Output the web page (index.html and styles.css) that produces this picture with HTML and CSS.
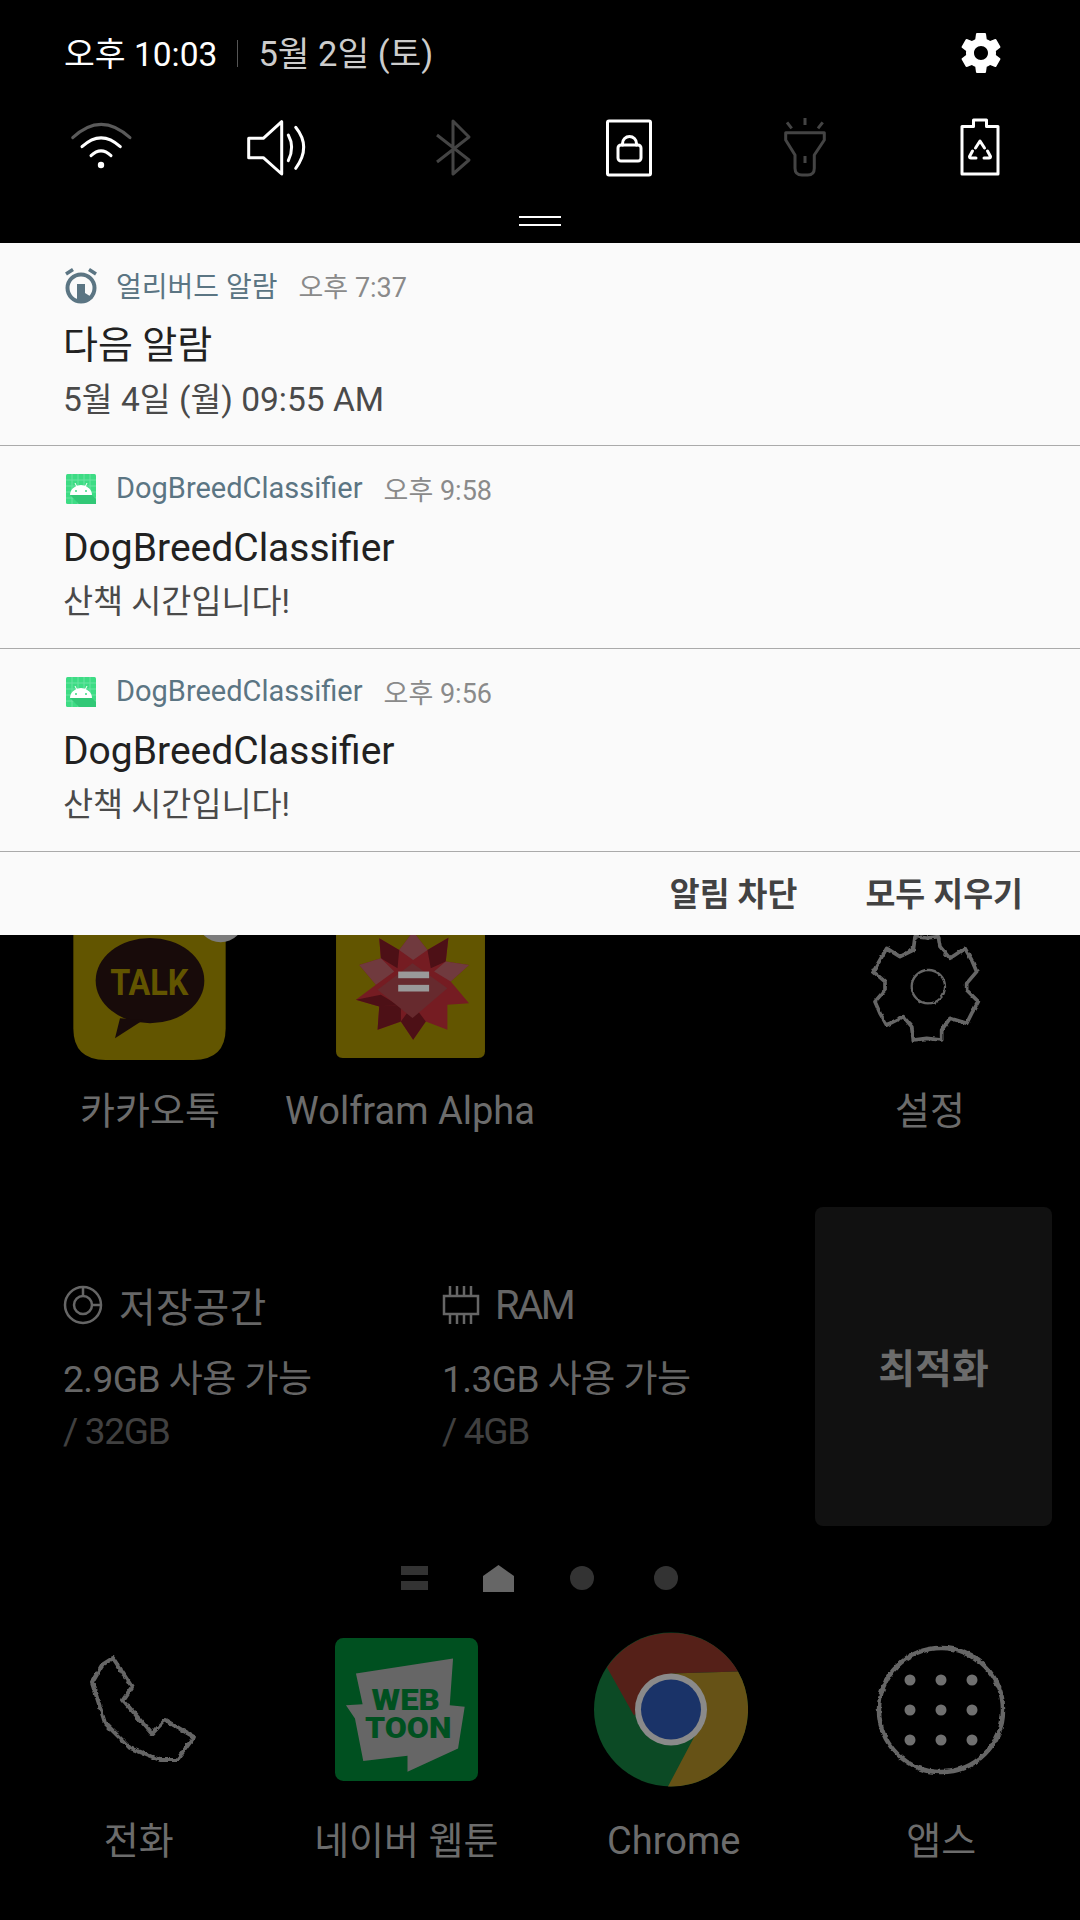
FILE: index.html
```html
<!DOCTYPE html>
<html lang="ko">
<head>
<meta charset="utf-8">
<title>Notification shade</title>
<link rel="stylesheet" href="styles.css">
</head>
<body>
<svg class="defs" aria-hidden="true"><defs>
  <filter id="rough" x="-10%" y="-10%" width="120%" height="120%">
    <feTurbulence type="fractalNoise" baseFrequency="0.07" numOctaves="2" seed="4" result="n"/>
    <feDisplacementMap in="SourceGraphic" in2="n" scale="9" xChannelSelector="R" yChannelSelector="G"/>
    <feGaussianBlur stdDeviation="0.7"/>
  </filter>
  <filter id="roughfine" x="-10%" y="-10%" width="120%" height="120%">
    <feTurbulence type="fractalNoise" baseFrequency="0.18" numOctaves="2" seed="7" result="n"/>
    <feDisplacementMap in="SourceGraphic" in2="n" scale="4" xChannelSelector="R" yChannelSelector="G"/>
    <feGaussianBlur stdDeviation="0.4"/>
  </filter>
</defs></svg>
<div class="screen">
  <header class="shade">
    <div class="status">
      <span class="clock">오후 10:03</span>
      <span class="sep"></span>
      <span class="date">5월 2일 (토)</span>
      <svg class="gear" viewBox="0 0 24 24"><path fill="#fff" d="M19.43 12.98c.04-.32.07-.64.07-.98s-.03-.66-.07-.98l2.11-1.65c.19-.15.24-.42.12-.64l-2-3.46c-.12-.22-.39-.3-.61-.22l-2.49 1c-.52-.4-1.08-.73-1.69-.98l-.38-2.65C14.46 2.18 14.25 2 14 2h-4c-.25 0-.46.18-.49.42l-.38 2.65c-.61.25-1.17.59-1.69.98l-2.49-1c-.23-.09-.49 0-.61.22l-2 3.46c-.13.22-.07.49.12.64l2.11 1.65c-.04.32-.07.65-.07.98s.03.66.07.98l-2.11 1.65c-.19.15-.24.42-.12.64l2 3.46c.12.22.39.3.61.22l2.49-1c.52.4 1.08.73 1.69.98l.38 2.65c.03.24.24.42.49.42h4c.25 0 .46-.18.49-.42l.38-2.65c.61-.25 1.17-.59 1.69-.98l2.49 1c.23.09.49 0 .61-.22l2-3.46c.12-.22.07-.49-.12-.64l-2.11-1.65zM12 15.5c-1.93 0-3.5-1.57-3.5-3.5s1.57-3.5 3.5-3.5 3.5 1.57 3.5 3.5-1.57 3.5-3.5 3.5z"/></svg>
    </div>
    <div class="toggles">
      <svg class="toggle" viewBox="60 108 80 80"><g class="ln-w">
        <path class="ln-dim" d="M71.7 137.7Q100 111 129 137.7"/>
        <path d="M81 146.7Q100 129 119.3 146.7"/>
        <path d="M90 155.7Q100 146 110 155.7"/></g>
        <circle cx="100" cy="165" r="3.2" fill="#fff"/></svg>
      <svg class="toggle" viewBox="237 108 80 80"><g class="ln-w">
        <path d="M248.7 138.3H263.3L281.7 121.7V174L263.3 157.7H248.7Z"/>
        <path d="M288.3 135Q295 147 288.3 160.7"/>
        <path d="M295.7 127.3Q311.7 147 295.7 168.3"/></g></svg>
      <svg class="toggle" viewBox="413 108 80 80"><path class="ln-g" d="M437 135L469 160L453 174V121L469 137L437 162"/></svg>
      <svg class="toggle" viewBox="590 108 80 80"><g class="ln-w">
        <rect x="608.5" y="121" width="43" height="54" rx="1.5"/>
        <rect x="619" y="145" width="23" height="16" rx="3"/>
        <path d="M623.5 145V143.500A7 7 0 0 1 637.500 143.500V145"/></g></svg>
      <svg class="toggle" viewBox="764 108 80 80"><g class="ln-g">
        <path d="M784.700 132.700H823.300V140L813.300 155V168.300Q813.300 175 806.700 175H801Q794 175 794 168.300V155L784.700 140Z"/>
        <path d="M804 156V163M804 118V125M786 122.300L790.700 128.300M821.700 122.300L817 128.300"/></g></svg>
      <svg class="toggle" viewBox="941 108 80 80"><g class="ln-w">
        <path d="M962 126.500H973.500V120H986.500V126.500H998V174H962Z"/>
        <path d="M975.500 148L980 141L984.500 148M972.500 151L969.500 156.500Q969.500 158 971 158H976M984 158H989Q990.500 158 990.500 156.500L987.500 151"/></g></svg>
    </div>
    <div class="handle"><i></i><i></i></div>
  </header>

  <section class="panel">
    <article class="note">
      <div class="note-head">
        <svg class="note-icon" viewBox="0 0 36 36">
          <path d="M3 6L10 1.500M33 6L26 1.500" stroke="#5b7583" stroke-width="3.500" fill="none"/>
          <circle cx="18" cy="20" r="13.500" fill="none" stroke="#5b7583" stroke-width="4"/>
          <path d="M14 34V16H22V25L30 30Q24 35 18 35Z" fill="#5b7583"/>
        </svg>
        <span class="app app-ko">얼리버드 알람</span>
        <span class="time">오후 7:37</span>
      </div>
      <div class="title title-ko">다음 알람</div>
      <div class="body body-wide">5월 4일 (월) 09:55 AM</div>
    </article>
    <article class="note">
      <div class="note-head">
        <svg class="note-icon" viewBox="0 0 36 36">
          <rect x="3" y="3" width="30" height="30" rx="1.500" fill="#3ddc84"/>
          <path d="M3 9H33M3 15H33M3 21H33M3 27H33M9 3V33M15 3V33M21 3V33M27 3V33" stroke="#6ae3a2" stroke-width="1"/>
          <path d="M7 24H29L33 28V33H16Z" fill="#31c876"/>
          <path d="M7 24A11 10 0 0 1 29 24Z" fill="#fff"/>
          <path d="M12 12L14 16M24 12L22 16" stroke="#fff" stroke-width="1"/>
          <circle cx="13" cy="20" r="1" fill="#3ddc84"/><circle cx="23" cy="20" r="1" fill="#3ddc84"/>
        </svg>
        <span class="app">DogBreedClassifier</span>
        <span class="time">오후 9:58</span>
      </div>
      <div class="title">DogBreedClassifier</div>
      <div class="body">산책 시간입니다!</div>
    </article>
    <article class="note">
      <div class="note-head">
        <svg class="note-icon" viewBox="0 0 36 36">
          <rect x="3" y="3" width="30" height="30" rx="1.500" fill="#3ddc84"/>
          <path d="M3 9H33M3 15H33M3 21H33M3 27H33M9 3V33M15 3V33M21 3V33M27 3V33" stroke="#6ae3a2" stroke-width="1"/>
          <path d="M7 24H29L33 28V33H16Z" fill="#31c876"/>
          <path d="M7 24A11 10 0 0 1 29 24Z" fill="#fff"/>
          <path d="M12 12L14 16M24 12L22 16" stroke="#fff" stroke-width="1"/>
          <circle cx="13" cy="20" r="1" fill="#3ddc84"/><circle cx="23" cy="20" r="1" fill="#3ddc84"/>
        </svg>
        <span class="app">DogBreedClassifier</span>
        <span class="time">오후 9:56</span>
      </div>
      <div class="title">DogBreedClassifier</div>
      <div class="body">산책 시간입니다!</div>
    </article>
    <div class="actions">
      <span>알림 차단</span>
      <span>모두 지우기</span>
    </div>
  </section>

  <main class="launcher">
    <div class="apps">
      <div class="app-cell">
        <div class="app-art">
          <svg class="kakao" viewBox="40 30 457 375">
            <path d="M40 30H497V310Q497 405 400 405H137Q40 405 40 310Z" fill="#625500"/>
            <ellipse cx="270" cy="167" rx="163" ry="128" fill="#180b0a"/>
            <path d="M180 280L165 340L250 285Z" fill="#180b0a"/>
            <text x="268" y="210" textLength="235" lengthAdjust="spacingAndGlyphs" class="kakao-talk">TALK</text>
            <circle cx="482" cy="-18" r="70" fill="#7c7c7c"/>
          </svg>
        </div>
        <div class="app-name">카카오톡</div>
      </div>
      <div class="app-cell">
        <div class="app-art">
          <svg class="wolfram" viewBox="825 30 448 370">
            <path d="M825 30H1273V380Q1273 400 1253 400H845Q825 400 825 380Z" fill="#625500"/>
            <path d="M1057 20L1100 75L1163 38L1155 110L1225 120L1170 170L1225 235L1160 240L1160 315L1095 290L1057 345L1020 290L950 315L955 245L885 225L945 180L895 120L960 100L955 40L1015 75Z" fill="#751c22"/>
            <path d="M955 40L1015 75L1010 130L960 100ZM1163 38L1100 75L1110 130L1155 110ZM885 225L960 210L1010 240L955 245ZM950 315L1020 290L1020 240L955 245ZM1057 345L1020 290L1057 240L1095 290Z" fill="#4d1016"/>
            <path d="M1057 20L1100 75L1057 105L1015 75ZM1155 110L1225 120L1170 170L1120 140ZM960 100L895 120L945 180L1000 140Z" fill="#703a3e"/>
            <path d="M950 195L1055 115L1160 190L1055 280Z" fill="#672a2e"/>
            <rect x="1012" y="140" width="93" height="20" fill="#9a9a9a"/>
            <rect x="1012" y="180" width="93" height="20" fill="#9a9a9a"/>
          </svg>
        </div>
        <div class="app-name">Wolfram Alpha</div>
      </div>
      <div class="app-cell"></div>
      <div class="app-cell">
        <div class="app-art">
          <svg class="cog" viewBox="0 0 390 360">
            <g filter="url(#rough)">
            <path class="rough" d="M165 20L200 24L235 20L240 50L270 85L315 55L335 90L350 125L320 160L320 180L355 215L335 250L320 280L270 265L245 300L245 330L200 325L160 330L155 290L130 260L80 285L60 250L45 215L75 180L75 155L40 125L60 90L80 55L120 80L160 60Z"/>
            <ellipse class="rough thin" cx="205" cy="170" rx="50" ry="50"/>
            </g>
          </svg>
        </div>
        <div class="app-name">설정</div>
      </div>
    </div>

    <div class="widget">
      <div class="stat">
        <div class="stat-head">
          <svg class="stat-icon" viewBox="0 0 40 40"><g class="ln-d">
            <circle cx="20" cy="20" r="18"/><circle cx="20" cy="20" r="9"/><path d="M20 2V11M29 20H38"/></g></svg>
          <span>저장공간</span>
        </div>
        <div class="stat-free">2.9GB 사용 가능</div>
        <div class="stat-total">/ 32GB</div>
      </div>
      <div class="stat">
        <div class="stat-head">
          <svg class="stat-icon" viewBox="0 0 40 40"><g class="ln-d">
            <rect x="2" y="11" width="34" height="18"/><path d="M8 1V11M15 1V11M22 1V11M29 1V11M8 29V39M15 29V39M22 29V39M29 29V39"/></g></svg>
          <span class="ram">RAM</span>
        </div>
        <div class="stat-free">1.3GB 사용 가능</div>
        <div class="stat-total">/ 4GB</div>
      </div>
      <div class="optimize">최적화</div>
    </div>

    <div class="pages">
      <span class="page"><i class="page-menu"></i></span>
      <span class="page"><svg class="page-home" viewBox="0 0 31 27"><path d="M15.500 0L31 11V27H0V11Z"/></svg></span>
      <span class="page"><i class="page-dot"></i></span>
      <span class="page"><i class="page-dot"></i></span>
    </div>

    <div class="dock">
      <div class="dock-cell">
        <div class="dock-art">
          <svg class="phone" viewBox="0 0 110 110">
            <path class="rough-phone" filter="url(#roughfine)" d="M23 3L42 32L33 45L62 79L75 65L104 82L87 105L70 105L40 93L15 68L2 27L12 10Z"/>
          </svg>
        </div>
        <div class="app-name">전화</div>
      </div>
      <div class="dock-cell">
        <div class="dock-art">
          <svg class="webtoon" viewBox="795 38 430 430">
            <rect x="795" y="38" width="430" height="430" rx="25" fill="#005020"/>
            <path d="M858 145L1150 100L1140 240L1185 245L1165 370L1013 440V392L880 408L855 280L828 240L878 237Z" fill="#666"/>
            <text class="wt-text" x="905" y="255" textLength="205" lengthAdjust="spacingAndGlyphs">WEB</text>
            <text class="wt-text" x="885" y="340" textLength="260" lengthAdjust="spacingAndGlyphs">TOON</text>
          </svg>
        </div>
        <div class="app-name">네이버 웹툰</div>
      </div>
      <div class="dock-cell">
        <div class="dock-art">
          <svg class="chrome" viewBox="-77 -77 154 154">
            <circle r="77" fill="#0c4a25"/>
            <path d="M0-36L67-38A77 77 0 0 1-3 77L25 24Z" fill="#665216"/>
            <path d="M-37 6L-64-42A77 77 0 0 1 67-38L0-36Z" fill="#552018"/>
            <circle r="36" fill="#8a8a8a"/>
            <circle r="30" fill="#1a3368"/>
          </svg>
        </div>
        <div class="app-name">Chrome</div>
      </div>
      <div class="dock-cell">
        <div class="dock-art">
          <svg class="drawer" viewBox="-65 -65 130 130">
            <circle r="62" fill="none" stroke="#666" stroke-width="4.500" filter="url(#roughfine)"/>
            <g fill="#707070">
              <circle cx="-31" cy="-30" r="5.500"/><circle cx="0" cy="-30" r="5.500"/><circle cx="31" cy="-30" r="5.500"/>
              <circle cx="-31" cy="0" r="5.500"/><circle cx="0" cy="0" r="5.500"/><circle cx="31" cy="0" r="5.500"/>
              <circle cx="-31" cy="30" r="5.500"/><circle cx="0" cy="30" r="5.500"/><circle cx="31" cy="30" r="5.500"/>
            </g>
          </svg>
        </div>
        <div class="app-name">앱스</div>
      </div>
    </div>
  </main>
</div>
</body>
</html>
```
FILE: styles.css
```css
* { box-sizing: border-box; }
html, body { margin: 0; padding: 0; background: #000; }
body { font-family: Roboto, "Noto Sans CJK KR", sans-serif; }
.defs { display: block; width: 0; height: 0; overflow: hidden; }
.screen { width: 1080px; height: 1920px; overflow: hidden; display: flex; flex-direction: column; background: #000; }

/* quick settings header */
.shade { height: 243px; flex: none; padding-top: 28px; }
.status { height: 50px; padding: 0 75px 4px 64px; display: flex; align-items: center; color: #fff; }
.clock { color: #fff; font-size: 33.5px; }
.sep { width: 1px; height: 27px; background: #555; margin: 4px 20px 0; }
.date { color: #ccc; font-size: 34.5px; }
.gear { width: 48px; height: 48px; margin: 0 0 -4px auto; }
.toggles { margin-top: 30px; padding: 0 11px 0 13px; display: grid; grid-template-columns: repeat(6, 1fr); justify-items: center; }
.toggle { width: 80px; height: 80px; display: block; }
.toggle path, .toggle rect { fill: none; }
.ln-w { stroke: #fff; stroke-width: 3; fill: none; stroke-linecap: round; stroke-linejoin: round; }
.ln-w .ln-dim { stroke: #5a5a5a; }
.ln-g { stroke: #444; stroke-width: 3; fill: none; stroke-linejoin: round; }
.handle { margin-top: 28px; display: flex; flex-direction: column; align-items: center; gap: 6px; }
.handle i { width: 42px; height: 2px; background: #fff; }

/* notifications */
.panel { height: 692px; flex: none; background: #fafafa; display: flex; flex-direction: column; }
.note { height: 203px; flex: none; padding: 24px 0 0 63px; border-bottom: 1px solid #aaa; }
.note-head { height: 40px; margin-top: -2px; display: flex; align-items: center; font-size: 29px; }
.note-icon { width: 36px; height: 36px; flex: none; margin: 2px 17px 0 0; }
.app { color: #5b7583; }
.app-ko { font-size: 28px; }
.time { color: #8a8a8a; margin-left: 21px; font-size: 27px; }
.title { margin-top: 15px; height: 50px; line-height: 50px; font-size: 39px; color: #212121; }
.title-ko { font-size: 38px; }
.body { margin-top: 4px; height: 50px; line-height: 50px; font-size: 32.700px; color: #4a4a4a; }
.body-wide { font-size: 33.500px; padding-top: 1px; }
.actions { flex: 1; display: flex; justify-content: flex-end; align-items: center; gap: 68px; padding: 0 57px 4px 0; font-size: 32.500px; font-weight: 700; color: #424242; }

/* launcher */
.launcher { flex: 1; display: flex; flex-direction: column; min-height: 0; }
.apps { height: 272px; flex: none; overflow: hidden; padding: 0 20px; display: grid; grid-template-columns: repeat(4, 1fr); }
.app-cell, .dock-cell { display: flex; flex-direction: column; align-items: center; white-space: nowrap; }
.app-art { height: 125px; display: flex; align-items: flex-start; justify-content: center; }
.app-name { height: 50px; line-height: 50px; font-size: 38px; color: #6c6c6c; margin-top: 26px; }
.dock-cell .app-name { margin-top: 29px; }
.kakao { width: 153px; height: 125px; overflow: visible; margin-right: 2px; }
.kakao-talk { font-family: Roboto, sans-serif; font-weight: 700; font-size: 110px; fill: #625500; text-anchor: middle; }
.wolfram { width: 149px; height: 123px; overflow: visible; }
.cog { width: 130px; height: 120px; margin: -5px 10px 0 0; overflow: visible; }
.rough { fill: none; stroke: #666; stroke-width: 11; stroke-linejoin: round; }
.rough.thin { stroke-width: 7; }

.widget { height: 319px; flex: none; padding-left: 63px; display: grid; grid-template-columns: 379px 373px 237px; }
.stat { padding-top: 76px; }
.stat-head { height: 44px; display: flex; align-items: center; font-size: 40px; color: #666; }
.stat-icon { width: 40px; height: 40px; margin-right: 16px; }
.ram { letter-spacing: -2.5px; margin-left: -3px; }
.ln-d { fill: none; stroke: #666; stroke-width: 2.500; }
.stat-free { margin-top: 31px; height: 44px; line-height: 44px; font-size: 37px; letter-spacing: -0.5px; color: #666; }
.stat-total { margin-top: 8px; height: 44px; line-height: 44px; font-size: 37px; letter-spacing: -1.3px; color: #404040; }
.optimize { background: #111; border-radius: 8px; display: flex; align-items: center; justify-content: center; font-size: 40px; font-weight: 700; color: #6c6c6c; padding-bottom: 2px; }

.pages { height: 48px; margin-top: 28px; flex: none; display: flex; justify-content: center; }
.page { width: 84px; display: flex; align-items: center; justify-content: center; }
.page-menu { display: block; width: 27px; height: 24px; background: linear-gradient(#333 0 9px, transparent 9px 15px, #333 15px); }
.page-home { width: 31px; height: 27px; fill: #666; }
.page-dot { display: block; width: 24px; height: 24px; border-radius: 50%; background: #333; }

.dock { flex: 1; padding: 30px 5px 0; display: grid; grid-template-columns: repeat(4, 1fr); }
.dock-art { height: 155px; display: flex; align-items: center; justify-content: center; }
.phone { width: 110px; height: 110px; margin-left: 12px; overflow: visible; }
.rough-phone { fill: none; stroke: #666; stroke-width: 4; stroke-linejoin: round; }
.webtoon { width: 143px; height: 143px; }
.wt-text { font-family: Roboto, sans-serif; font-weight: 900; font-size: 88px; fill: #005020; }
.chrome { width: 154px; height: 155px; margin-right: 6px; }
.drawer { width: 130px; height: 130px; overflow: visible; }
```
